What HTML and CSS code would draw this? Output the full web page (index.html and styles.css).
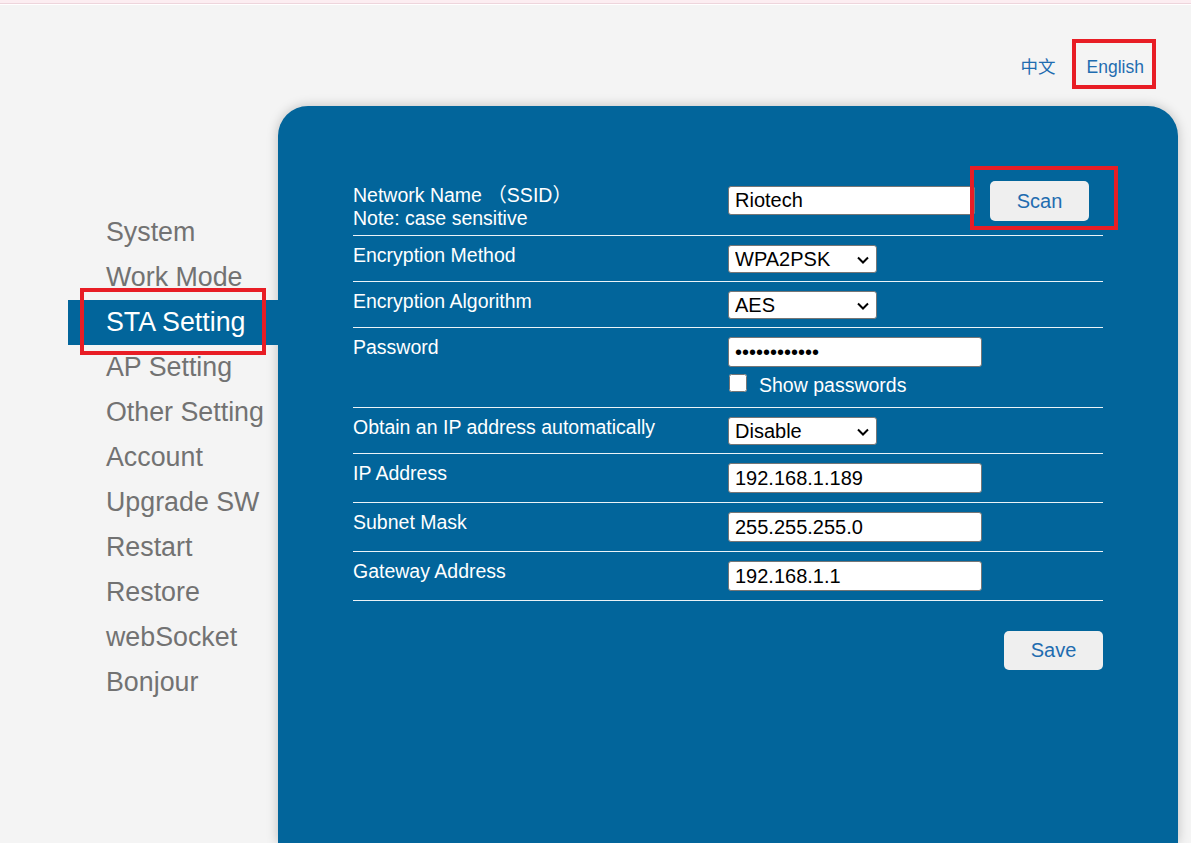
FILE: index.html
```html
<!DOCTYPE html>
<html lang="en">
<head>
    <meta charset="UTF-8">
    <meta name="viewport" content="width=device-width, initial-scale=1.0">
    <title>STA Setting</title>
    <link rel="stylesheet" href="styles.css">
</head>
<body>
    <div class="topline"></div>

    <div class="header">
        <a href="#" class="lang">中文</a>
        <a href="#" class="lang lang-current">English</a>
    </div>

    <div class="main">
        <ul class="nav">
            <li>System</li>
            <li>Work Mode</li>
            <li class="active">STA Setting</li>
            <li>AP Setting</li>
            <li>Other Setting</li>
            <li>Account</li>
            <li>Upgrade SW</li>
            <li>Restart</li>
            <li>Restore</li>
            <li>webSocket</li>
            <li>Bonjour</li>
        </ul>

        <div class="panel">
            <form class="settings">
                <div class="row row-first">
                    <div class="label label-two">Network Name （SSID）<br>Note: case sensitive</div>
                    <div class="control control-ssid">
                        <input type="text" class="text-input ssid-input" value="Riotech">
                        <button type="button" class="btn scan-btn">Scan</button>
                    </div>
                </div>

                <div class="row">
                    <div class="label">Encryption Method</div>
                    <div class="control">
                        <span class="select-wrap">
                            <select class="select-input">
                                <option>WPA2PSK</option>
                            </select>
                            <svg class="chevron" width="12" height="8" viewBox="0 0 12 8"><path d="M1 1.5 L6 6.5 L11 1.5" fill="none" stroke="#000" stroke-width="2"/></svg>
                        </span>
                    </div>
                </div>

                <div class="row">
                    <div class="label">Encryption Algorithm</div>
                    <div class="control">
                        <span class="select-wrap">
                            <select class="select-input">
                                <option>AES</option>
                            </select>
                            <svg class="chevron" width="12" height="8" viewBox="0 0 12 8"><path d="M1 1.5 L6 6.5 L11 1.5" fill="none" stroke="#000" stroke-width="2"/></svg>
                        </span>
                    </div>
                </div>

                <div class="row row-input">
                    <div class="label">Password</div>
                    <div class="control">
                        <input type="password" class="text-input" value="riotech12345">
                        <label class="show-pass">
                            <input type="checkbox" class="checkbox">
                            <span>Show passwords</span>
                        </label>
                    </div>
                </div>

                <div class="row">
                    <div class="label">Obtain an IP address automatically</div>
                    <div class="control">
                        <span class="select-wrap">
                            <select class="select-input">
                                <option>Disable</option>
                            </select>
                            <svg class="chevron" width="12" height="8" viewBox="0 0 12 8"><path d="M1 1.5 L6 6.5 L11 1.5" fill="none" stroke="#000" stroke-width="2"/></svg>
                        </span>
                    </div>
                </div>

                <div class="row row-input">
                    <div class="label">IP Address</div>
                    <div class="control">
                        <input type="text" class="text-input" value="192.168.1.189">
                    </div>
                </div>

                <div class="row row-input">
                    <div class="label">Subnet Mask</div>
                    <div class="control">
                        <input type="text" class="text-input" value="255.255.255.0">
                    </div>
                </div>

                <div class="row row-input">
                    <div class="label">Gateway Address</div>
                    <div class="control">
                        <input type="text" class="text-input" value="192.168.1.1">
                    </div>
                </div>

                <div class="actions">
                    <button type="button" class="btn save-btn">Save</button>
                </div>
            </form>
        </div>
    </div>
</body>
</html>
```

FILE: styles.css
```css
body {
    margin: 0;
    background-color: #f4f4f4;
    font-family: "Liberation Sans", Arial, "Noto Sans CJK SC", sans-serif;
    overflow: hidden;
}

.topline {
    height: 3px;
    background-color: #fcedf1;
    border-bottom: 1px solid #eed5dc;
    box-shadow: 0 1px 0 #ffffff;
}

/* language switch */
.header {
    display: flex;
    justify-content: flex-end;
    align-items: center;
    gap: 31px;
    height: 26px;
    padding: 50px 47px 26px 0;
}

.lang {
    color: #1f6cb0;
    text-decoration: none;
    font-size: 17.5px;
    line-height: 26px;
}

.lang-current {
    position: relative;
}

.lang-current::after {
    content: "";
    position: absolute;
    left: -15px;
    right: -12px;
    top: -15px;
    bottom: -9px;
    border: 4px solid #e81d25;
}

.main {
    display: flex;
    padding-left: 68px;
}

/* left menu */
.nav {
    list-style: none;
    margin: 104px 0 0 0;
    padding: 0;
    width: 210px;
}

.nav li {
    height: 45px;
    line-height: 45px;
    padding-left: 38px;
    font-size: 26.8px;
    color: #727272;
    white-space: nowrap;
}

.nav li.active {
    position: relative;
    background-color: #02659b;
    color: white;
}

.nav li.active::after {
    content: "";
    position: absolute;
    left: 12px;
    right: 12px;
    top: -12px;
    bottom: -10px;
    border: 4px solid #e81d25;
}

/* blue card, its bottom runs off the window */
.panel {
    width: 900px;
    height: 737px;
    box-sizing: border-box;
    padding: 67px 75px 0 75px;
    background-color: #02659b;
    border-radius: 30px 30px 0 0;
    box-shadow: 0 0 12px rgba(0, 0, 0, 0.22);
}

.settings {
    width: 750px;
}

.row {
    display: flex;
    padding: 9px 0 8px 0;
    border-bottom: 1px solid rgba(255, 255, 255, 0.92);
}

.row-input {
    padding-bottom: 9px;
}

.row-first {
    padding-bottom: 5px;
}

.label {
    width: 375px;
    color: white;
    font-size: 19.5px;
    line-height: 21px;
}

.label-two {
    padding-top: 2px;
    line-height: 23px;
}

.control {
    display: flex;
    flex-direction: column;
    align-items: flex-start;
}

.control-ssid {
    flex-direction: row;
}

.text-input {
    width: 254px;
    height: 30px;
    box-sizing: border-box;
    padding: 0 6px;
    border: 1px solid #767676;
    border-radius: 3px;
    background-color: white;
    font-family: "Liberation Sans", Arial, sans-serif;
    font-size: 20px;
    color: black;
}

.ssid-input {
    width: 247px;
    height: 29px;
    margin-top: 4px;
}

.select-wrap {
    position: relative;
    display: inline-block;
}

.select-input {
    appearance: none;
    display: block;
    width: 149px;
    height: 28px;
    box-sizing: border-box;
    padding: 0 0 0 6px;
    border: 1px solid #767676;
    border-radius: 3px;
    background-color: white;
    font-family: "Liberation Sans", Arial, sans-serif;
    font-size: 20px;
    color: black;
}

.chevron {
    position: absolute;
    right: 8px;
    top: 11px;
    pointer-events: none;
}

.show-pass {
    display: flex;
    align-items: center;
    gap: 12px;
    margin-top: 5px;
    height: 26px;
    color: white;
    font-size: 19.5px;
}

.checkbox {
    width: 18px;
    height: 18px;
    margin: 0 0 0 1px;
    position: relative;
    top: -2px;
}

.btn {
    background-color: #efefef;
    color: #1f6cb0;
    border: none;
    border-radius: 5px;
    font-family: "Liberation Sans", Arial, sans-serif;
    font-size: 20px;
    cursor: pointer;
}

.scan-btn {
    position: relative;
    width: 99px;
    height: 40px;
    margin: -1px 0 0 15px;
}

.scan-btn::after {
    content: "";
    position: absolute;
    left: -20px;
    right: -29px;
    top: -15px;
    bottom: -9px;
    border: 4px solid #e81d25;
}

.actions {
    display: flex;
    justify-content: flex-end;
    margin-top: 30px;
}

.save-btn {
    width: 99px;
    height: 39px;
}
```
